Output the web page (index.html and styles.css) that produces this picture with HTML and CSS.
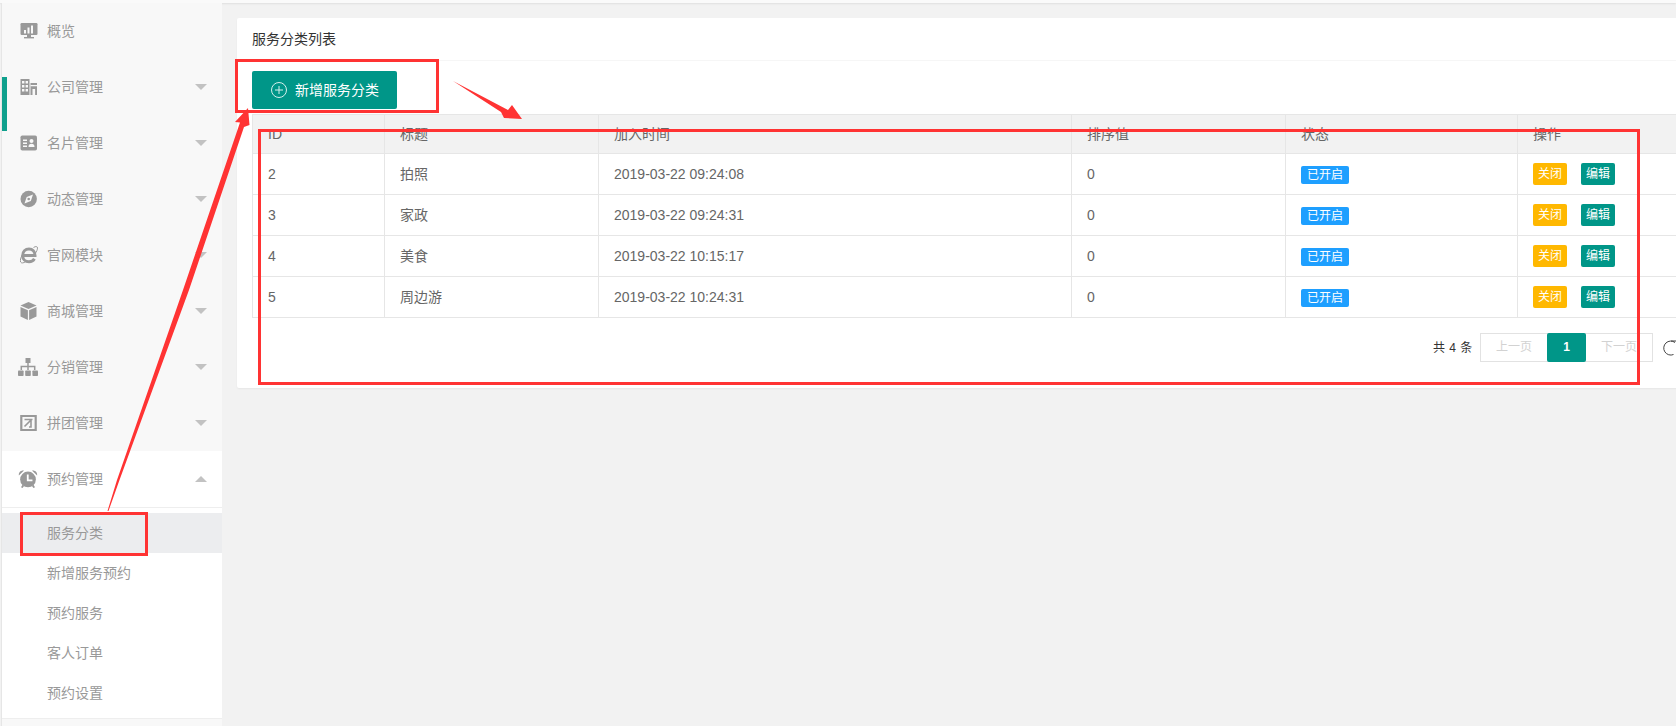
FILE: index.html
```html
<!DOCTYPE html>
<html lang="zh-CN">
<head>
<meta charset="utf-8">
<title>服务分类列表</title>
<link rel="stylesheet" href="styles.css">
</head>
<body>
<div class="topbar"></div>
<div class="layout">
  <aside class="side">
    <span class="indicator"></span>
    <ul class="nav">
      <li class="nav-item"><svg class="ico" viewBox="0 0 18 18"><rect x="0.5" y="1" width="17" height="12" rx="1.2"/><rect class="w" x="4" y="8" width="2" height="3.5"/><rect class="w" x="7.5" y="5.5" width="2" height="6"/><rect class="w" x="11" y="3.5" width="2" height="8"/><rect x="7" y="13" width="4" height="2.4"/><rect x="4" y="15" width="10" height="1.4"/></svg><span>概览</span></li>
      <li class="nav-item has-sub"><svg class="ico" viewBox="0 0 18 18"><path d="M0.5 1h9v16h-9z"/><path class="w" d="M2 3h2.4v2.6H2zM5.600 3H8v2.600H5.600zM2 7h2.400v2.600H2zM5.600 7H8v2.600H5.600zM2 11h2.400v2.600H2zM5.600 11H8v2.600H5.600z"/><path d="M10.500 5h6.500v12h-6.500z"/><path class="w" d="M10.500 7h6.500v1.200h-6.500zM12.500 11h2.600v6h-2.600z"/></svg><span>公司管理</span></li>
      <li class="nav-item has-sub"><svg class="ico" viewBox="0 0 18 18"><rect x="0.5" y="1.500" width="16.500" height="15" rx="1.800"/><path class="w" d="M3 5.500h4v1.500H3zM3 8.500h4V10H3zM3 11.500h4V13H3z"/><circle class="w" cx="11.500" cy="7" r="2"/><path class="w" d="M8.500 13c0-2.200 1.200-3.300 3-3.300s3 1.100 3 3.300z"/></svg><span>名片管理</span></li>
      <li class="nav-item has-sub"><svg class="ico" viewBox="0 0 18 18"><circle cx="8.700" cy="9" r="8.200"/><path class="w" d="M13 4.600 10.800 10.900 4.500 13.400 6.700 7z"/><circle cx="8.700" cy="9" r="1.300"/></svg><span>动态管理</span></li>
      <li class="nav-item has-sub"><svg class="ico" viewBox="0 0 18 20"><path class="e" d="M3.800 10.400h11.200c0-4-2.400-6.400-6-6.400-3.700 0-6.300 2.900-6.300 6.400 0 3.600 2.600 6.400 6.300 6.400 2.600 0 4.400-1.200 5.400-3"/><path class="orbit" d="M13.500 2.500c2.400-1.500 4-1.200 4 .6 0 1.400-.9 3.400-2.300 5.400M2.200 10c-1.500 2.800-2.300 5.400-1.600 7 .7 1.300 2.700 1.200 5-.3"/></svg><span>官网模块</span></li>
      <li class="nav-item has-sub"><svg class="ico" viewBox="0 0 18 20"><path d="M8.500 1 16.500 4.500 8.500 8 .5 4.500z"/><path d="M.5 5.900 7.900 9.200v9.800L.5 15.500z"/><path d="M16.500 5.900 9.100 9.200v9.800l7.400-3.500z"/></svg><span>商城管理</span></li>
      <li class="nav-item has-sub"><svg class="ico ico-wide" viewBox="0 0 20 18"><rect x="7.500" y="0" width="5" height="5"/><path class="line" d="M10 5v7M3.300 12V8.500h13.400V12"/><rect x="0" y="12.500" width="5.600" height="5.500" rx=".8"/><rect x="7.200" y="12.500" width="5.600" height="5.500" rx=".8"/><rect x="14.400" y="12.500" width="5.600" height="5.500" rx=".8"/></svg><span>分销管理</span></li>
      <li class="nav-item has-sub"><svg class="ico" viewBox="0 0 18 18"><path class="line thick" d="M1.300 2h14.400v14H1.300z"/><path class="line thin" d="M4.500 5.500h8M11 5.500v7.500l-2 0M10.500 6.500 4.500 12.500"/></svg><span>拼团管理</span></li>
      <li class="nav-item has-sub open"><svg class="ico ico-wide" viewBox="0 0 20 19"><circle cx="10" cy="10" r="8.300"/><path class="w" d="M8.800 4.800h1.900v5.100h4v1.900H8.800z"/><path d="M.4 5.800C-.2 2.600 2.400 0 5.800.6zM19.600 5.800c.6-3.200-2-5.800-5.400-5.200zM4.200 15.500l1.800 1.200-1.700 2.300-1.700-.9zM15.800 15.500l-1.800 1.200 1.700 2.300 1.700-.9z"/></svg><span>预约管理</span></li>
    </ul>
    <ul class="sub">
      <li class="sub-item active">服务分类</li>
      <li class="sub-item">新增服务预约</li>
      <li class="sub-item">预约服务</li>
      <li class="sub-item">客人订单</li>
      <li class="sub-item">预约设置</li>
    </ul>
  </aside>
  <main class="main">
    <section class="card">
      <header class="card-head">服务分类列表</header>
      <div class="card-body">
        <button class="add-btn"><svg class="plus" viewBox="0 0 16 16"><circle cx="8" cy="8" r="7.500"/><path d="M8 4v8M4 8h8"/></svg>新增服务分类</button>
        <table class="grid">
          <thead>
            <tr><th>ID</th><th>标题</th><th>加入时间</th><th>排序值</th><th>状态</th><th>操作</th></tr>
          </thead>
          <tbody>
            <tr><td>2</td><td>拍照</td><td>2019-03-22 09:24:08</td><td>0</td><td><span class="tag">已开启</span></td><td><span class="mini warn">关闭</span><span class="mini ok">编辑</span></td></tr>
            <tr><td>3</td><td>家政</td><td>2019-03-22 09:24:31</td><td>0</td><td><span class="tag">已开启</span></td><td><span class="mini warn">关闭</span><span class="mini ok">编辑</span></td></tr>
            <tr><td>4</td><td>美食</td><td>2019-03-22 10:15:17</td><td>0</td><td><span class="tag">已开启</span></td><td><span class="mini warn">关闭</span><span class="mini ok">编辑</span></td></tr>
            <tr><td>5</td><td>周边游</td><td>2019-03-22 10:24:31</td><td>0</td><td><span class="tag">已开启</span></td><td><span class="mini warn">关闭</span><span class="mini ok">编辑</span></td></tr>
          </tbody>
        </table>
        <div class="pager">
          <span class="total">共 4 条</span>
          <div class="pages"><span class="page off">上一页</span><span class="page cur">1</span><span class="page off">下一页</span></div>
          <svg class="refresh" viewBox="0 0 16 16"><path d="M12 2.500A7 7 0 1 0 10.500 14.500M8 1h8"/></svg>
        </div>
      </div>
    </section>
  </main>
</div>
<svg class="marks" viewBox="0 0 1676 726">
  <rect x="236.500" y="60.500" width="201" height="51"/>
  <rect x="259.500" y="130.500" width="1379" height="253"/>
  <rect x="21.500" y="513.500" width="125" height="41"/>
  <polygon points="248,108 249.500,125 244,127 189,290 119.500,480 108.500,511 107.500,511 117,480 183,290 240,122.500 235,122"/>
  <polygon points="453,81 508,110 512,105 522,119 504,118 501,112"/>
</svg>
</body>
</html>
```

FILE: styles.css
```css
* { box-sizing: border-box; }
html, body { margin: 0; height: 726px; overflow: hidden; }
body {
  background: #f2f2f2;
  font: 14px/20px "Liberation Sans", "Noto Sans CJK SC", sans-serif;
  color: #666;
}
ul { list-style: none; margin: 0; padding: 0; }

.topbar { height: 3px; background: #fafafa; box-shadow: 0 1px 2px rgba(0,0,0,.08); position: relative; }
.layout { display: flex; height: 723px; }

.side {
  position: relative;
  flex: none;
  width: 221px;
  margin-left: 1px;
  border-left: 1px solid #e6e6e6;
  background: #f8f8f8;
  color: #999;
}
.indicator { position: absolute; left: 0; top: 74px; width: 5px; height: 54px; background: #0fa08d; }

.nav-item { position: relative; display: flex; align-items: center; height: 56px; padding-left: 18px; }
.nav-item span { margin-left: 9px; }
.ico { flex: none; width: 18px; height: 18px; fill: #999; }
.ico .w { fill: #f8f8f8; }
.nav-item:nth-child(5) .ico, .nav-item:nth-child(6) .ico { height: 20px; }
.ico-wide { width: 20px; margin-left: -2px; }
.ico .e { fill: none; stroke: #999; stroke-width: 3; }
.ico .orbit { fill: none; stroke: #999; stroke-width: 1; }
.ico .line { fill: none; stroke: #999; stroke-width: 1.500; }
.ico .thick { stroke-width: 2.200; }
.ico .thin { stroke-width: 1.600; }
.has-sub::after {
  content: "";
  position: absolute;
  left: 193px;
  top: 25px;
  border: 6px solid transparent;
  border-top: 6px solid #c2c2c2;
  border-bottom: 0;
}
.open { height: 57px; padding-bottom: 1px; background: #fff; border-bottom: 1px solid #eee; }
.open .w { fill: #fff; }
.open::after { border-top: 0; border-bottom: 6px solid #c2c2c2; }

.sub { background: #fff; padding: 5px 0; border-bottom: 1px solid #eee; }
.sub-item { height: 40px; line-height: 40px; padding-left: 45px; }
.active { background: #ecedef; }

.main { flex: none; width: 1539px; padding: 15px 0 0 15px; }
.card { width: 1527px; background: #fff; border-radius: 2px; box-shadow: 0 1px 2px rgba(0,0,0,.05); }
.card-head { height: 43px; padding: 0 15px; line-height: 42px; color: #333; border-bottom: 1px solid #f6f6f6; }
.card-body { padding: 10px 15px 26px; }

.add-btn {
  display: flex;
  align-items: center;
  width: 145px;
  height: 38px;
  padding: 0 0 0 19px;
  border: 0;
  border-radius: 2px;
  background: #009688;
  color: #fff;
  font: inherit;
}
.plus { width: 16px; height: 16px; margin-right: 8px; fill: none; stroke: #d5efec; stroke-width: 1; }

.grid { table-layout: fixed; width: 1497px; margin-top: 5px; border-collapse: collapse; border: 1px solid #e6e6e6; }
.grid th, .grid td { height: 41px; padding: 0 15px; border: 1px solid #e6e6e6; text-align: left; font-weight: 400; }
.grid th { height: 39px; background: #f2f2f2; }
.grid th:nth-child(1) { width: 132px; }
.grid th:nth-child(2) { width: 214px; }
.grid th:nth-child(3) { width: 473px; }
.grid th:nth-child(4) { width: 214px; }
.grid th:nth-child(5) { width: 232px; }

.tag { display: inline-block; height: 18px; padding: 0 6px; border-radius: 2px; background: #1e9fff; color: #fff; font-size: 12px; line-height: 18px; vertical-align: middle; }
.mini { display: inline-block; width: 34px; height: 22px; margin-right: 14px; border-radius: 2px; color: #fff; font-size: 12px; line-height: 22px; text-align: center; vertical-align: middle; }
.warn { background: #ffb800; }
.ok { background: #009688; }

.pager { display: flex; align-items: center; height: 29px; margin-top: 15px; padding-left: 1181px; font-size: 12px; color: #333; }
.total { width: 47px; word-spacing: 1px; }
.pages { display: flex; height: 29px; border: 1px solid #e2e2e2; }
.page { padding: 0 15px; line-height: 27px; }
.off { color: #d2d2d2; }
.cur { width: 39px; height: 29px; margin-top: -1px; padding: 0; background: #009688; border-radius: 2px; color: #fff; font-weight: 700; line-height: 29px; text-align: center; }
.refresh { flex: none; width: 16px; height: 16px; margin-left: 10px; fill: none; stroke: #444; stroke-width: 1; }

.marks { position: absolute; left: 0; top: 0; width: 1676px; height: 726px; pointer-events: none; }
.marks rect { fill: none; stroke: #ff3333; stroke-width: 3; }
.marks polygon { fill: #ff3333; }
```
